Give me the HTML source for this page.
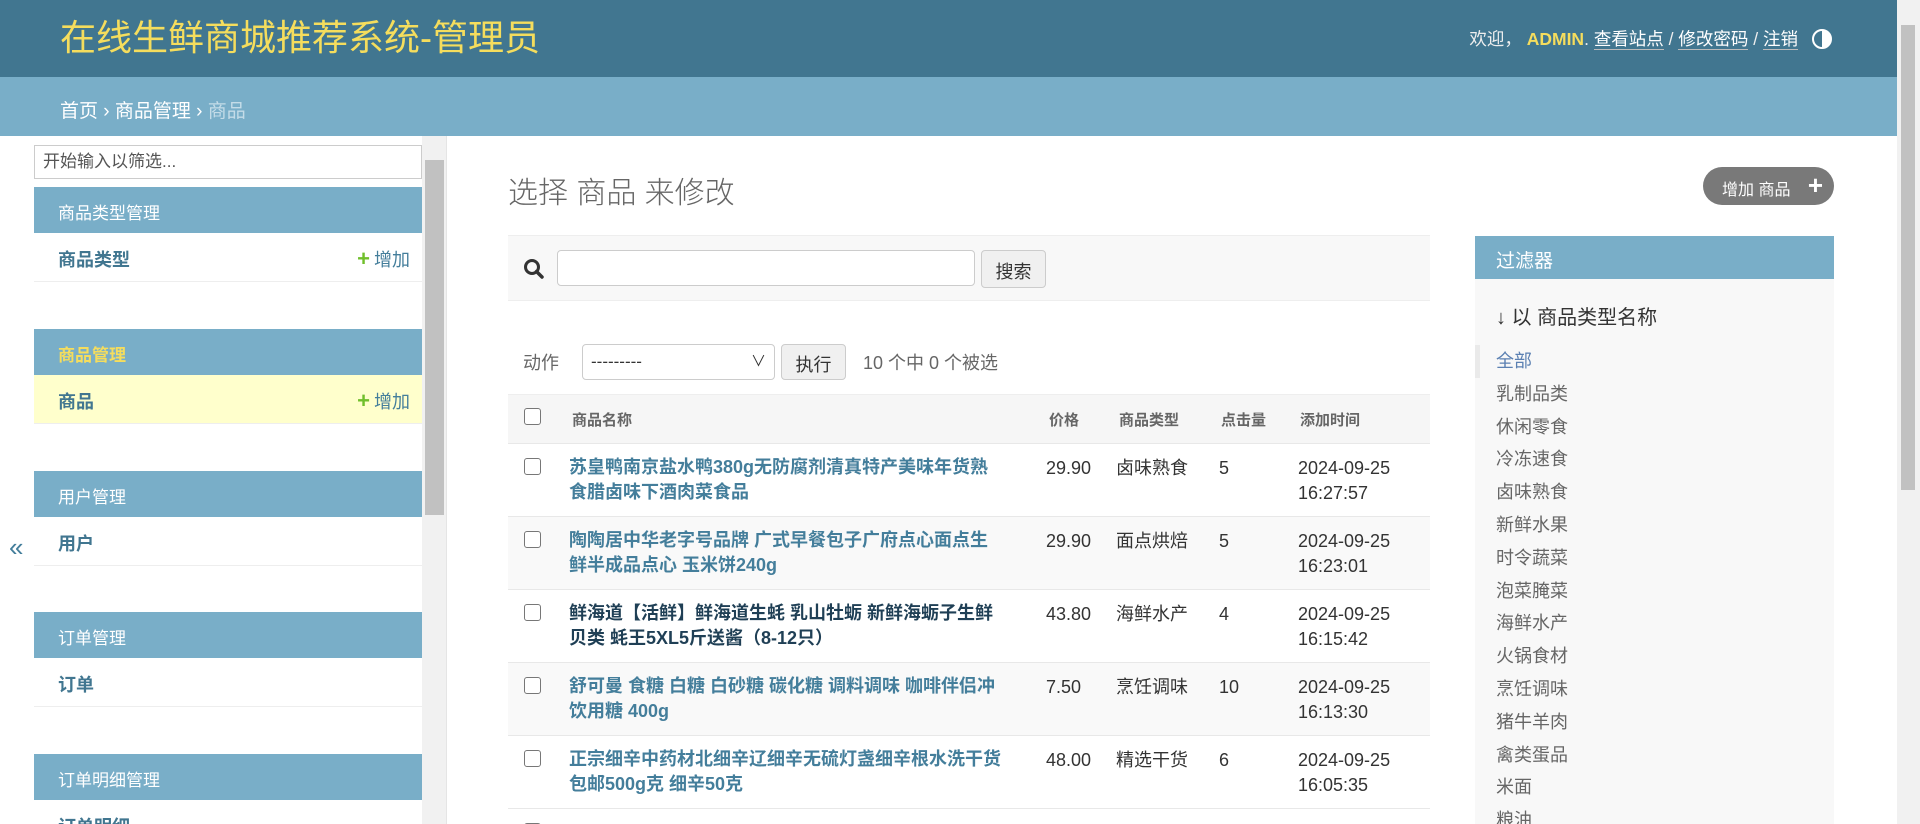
<!DOCTYPE html>
<html style="overflow:hidden;width:1920px;height:824px"><head><meta charset="utf-8"><style>
*{box-sizing:border-box;margin:0;padding:0}
body{width:1920px;height:824px;overflow:hidden;font-family:"Liberation Sans","Noto Sans CJK SC",sans-serif;color:#333;background:#fff;position:relative;font-size:17px}
.hdr{position:absolute;left:0;top:0;width:1897px;height:77px;background:#417690}
.hdr .t{position:absolute;left:60px;top:17px;font-size:36px;color:#f5dd5d;line-height:42px}
.hdr .u{position:absolute;right:99px;top:27px;font-size:17.5px;line-height:24px;color:#eee}
.hdr .u b{color:#f5dd5d}
.hdr .u a{color:#fff;border-bottom:1px solid #bbb;text-decoration:none}
.moon{position:absolute;right:65px;top:29px;width:20px;height:20px;border-radius:50%;border:2px solid #fff;background:linear-gradient(90deg,#417690 50%,#fff 50%)}
.bc{position:absolute;left:0;top:77px;width:1897px;height:59px;background:#79aec8;color:#fff;font-size:19px;padding:19px 0 0 60px}
.bc span{color:#c4dce8}
.vs{position:absolute;right:0;top:0;width:23px;height:824px;background:#f1f1f1}
.vs .th{position:absolute;left:4px;top:25px;width:14px;height:465px;background:#c1c1c1}
.side{position:absolute;left:34px;top:136px;width:388px;height:688px;overflow:hidden}
.sinput{position:absolute;left:0;top:9px;width:388px;height:34px;border:1px solid #ccc;font-size:17px;color:#555;padding:6px 8px;line-height:20px}
.mh{position:absolute;left:0;width:388px;height:46px;background:#79aec8;color:#fff;font-size:17px;padding:12px 0 0 24px}
.mr{position:absolute;left:0;width:388px;height:49px;border-bottom:1px solid #eee;font-size:18px;font-weight:bold;color:#417690;padding:13px 0 0 24px}
.mr .add{position:absolute;right:12px;top:13px;font-weight:normal;color:#447e9b;font-size:18px}
.mr .add i{font-style:normal;color:#70bf2b;font-weight:bold;font-size:22px;margin-right:4px}
.ss{position:absolute;left:422px;top:136px;width:25px;height:688px;background:#f1f1f1;border-right:1px solid #e5e5e5}
.ss .th{position:absolute;left:3px;top:24px;width:19px;height:355px;background:#c1c1c1}
.coll{position:absolute;left:9px;top:532px;font-size:26px;color:#447e9b}
h1{position:absolute;left:508px;top:168px;font-size:30px;font-weight:300;color:#666}
.addbtn{position:absolute;left:1703px;top:167px;width:131px;height:38px;border-radius:19px;background:#797979;color:#fff;font-size:16px;padding:9px 0 0 19px}
.addbtn b{position:absolute;right:11px;top:3px;font-size:26px}
.tb{position:absolute;left:508px;top:235px;width:922px;height:66px;background:#f8f8f8;border-top:1px solid #eee;border-bottom:1px solid #eee}
.inp{position:absolute;border:1px solid #ccc;border-radius:4px;background:#fff}
.btn{position:absolute;border:1px solid #ccc;border-radius:4px;background:#f0f0f0;font-size:18px;color:#333;text-align:center}
.thead{position:absolute;left:508px;top:394px;width:922px;height:49px;background:#f6f6f6;border-top:1px solid #eee;font-size:15px;font-weight:bold;color:#666}
.cb{position:absolute;width:17px;height:17px;border:1.5px solid #777;border-radius:3px;background:#fff}
.wrap{position:absolute;left:0;top:0;width:1920px;height:824px;overflow:hidden}
.row{position:absolute;left:508px;width:922px;height:74px;border-top:1px solid #e8e8e8;font-size:18px;line-height:25px;color:#333}
.row .n{position:absolute;left:61px;top:11px;width:436px;font-weight:bold;color:#447e9b}
.row .c{position:absolute;top:12px}
.flt{position:absolute;left:1475px;top:236px;width:359px;height:588px;background:#f8f8f8;overflow:hidden}
.flt .h{height:43px;background:#79aec8;color:#fff;font-size:19px;padding:10px 0 0 21px}
.flt .s{position:absolute;left:21px;top:65px;font-size:20px;color:#333}
.flt ul{list-style:none;position:absolute;left:0;top:109px;font-size:18px;line-height:32.8px;color:#666}
.flt li{padding-left:21px}
.flt li.sel{color:#5b80b2;border-left:5px solid #eaeaea;padding-left:16px}
</style></head><body><div class="wrap">
<div class="hdr"><div class="t">在线生鲜商城推荐系统-管理员</div>
<div class="u">欢迎， <b>ADMIN</b>. <a>查看站点</a> / <a>修改密码</a> / <a>注销</a></div><div class="moon"></div></div>
<div class="bc">首页 › 商品管理 › <span>商品</span></div>
<div class="vs"><div class="th"></div></div>
<div class="coll">«</div>
<div class="side">
<div class="sinput">开始输入以筛选...</div>
<div class="mh" style="top:51px">商品类型管理</div>
<div class="mr" style="top:97px">商品类型<span class="add"><i>+</i>增加</span></div>
<div class="mh" style="top:193px;color:#f5dd5d;font-weight:bold">商品管理</div>
<div class="mr" style="top:239px;background:#ffc">商品<span class="add"><i>+</i>增加</span></div>
<div class="mh" style="top:335px">用户管理</div>
<div class="mr" style="top:381px">用户</div>
<div class="mh" style="top:476px">订单管理</div>
<div class="mr" style="top:522px">订单</div>
<div class="mh" style="top:618px">订单明细管理</div>
<div class="mr" style="top:664px">订单明细</div>
</div>
<div class="ss"><div class="th"></div></div>
<h1>选择 商品 来修改</h1>
<div class="addbtn">增加 商品<b>+</b></div>
<div class="tb">
<svg style="position:absolute;left:15px;top:22px" width="22" height="22" viewBox="0 0 22 22"><circle cx="9" cy="9" r="6.5" fill="none" stroke="#333" stroke-width="3"/><path d="M13.5 13.5L19 19" stroke="#333" stroke-width="3.5" stroke-linecap="round"/></svg>
<div class="inp" style="left:49px;top:14px;width:418px;height:36px"></div>
<div class="btn" style="left:473px;top:14px;width:65px;height:38px;padding-top:7px">搜索</div>
</div>
<div style="position:absolute;left:523px;top:349px;font-size:18px;color:#666">动作</div>
<div class="inp" style="left:582px;top:344px;width:193px;height:36px;font-size:17px;padding:7px 8px">---------<span style="position:absolute;right:8px;top:5px;font-size:15px">∨</span></div>
<div class="btn" style="left:781px;top:344px;width:65px;height:36px;padding-top:6px">执行</div>
<div style="position:absolute;left:863px;top:349px;font-size:18px;color:#666">10 个中 0 个被选</div>
<div class="thead">
<div class="cb" style="left:16px;top:13px"></div>
<span style="position:absolute;left:64px;top:14px">商品名称</span>
<span style="position:absolute;left:541px;top:14px">价格</span>
<span style="position:absolute;left:611px;top:14px">商品类型</span>
<span style="position:absolute;left:713px;top:14px">点击量</span>
<span style="position:absolute;left:792px;top:14px">添加时间</span>
</div>
<div class="row" style="top:443px"><div class="cb" style="left:16px;top:14px"></div><div class="n">苏皇鸭南京盐水鸭380g无防腐剂清真特产美味年货熟食腊卤味下酒肉菜食品</div><div class="c" style="left:538px">29.90</div><div class="c" style="left:608px">卤味熟食</div><div class="c" style="left:711px">5</div><div class="c" style="left:790px">2024-09-25<br>16:27:57</div></div>
<div class="row" style="top:516px;background:#f9f9f9"><div class="cb" style="left:16px;top:14px"></div><div class="n">陶陶居中华老字号品牌 广式早餐包子广府点心面点生鲜半成品点心 玉米饼240g</div><div class="c" style="left:538px">29.90</div><div class="c" style="left:608px">面点烘焙</div><div class="c" style="left:711px">5</div><div class="c" style="left:790px">2024-09-25<br>16:23:01</div></div>
<div class="row" style="top:589px"><div class="cb" style="left:16px;top:14px"></div><div class="n" style="color:#1f3f55">鲜海道【活鲜】鲜海道生蚝 乳山牡蛎 新鲜海蛎子生鲜贝类 蚝王5XL5斤送酱（8-12只）</div><div class="c" style="left:538px">43.80</div><div class="c" style="left:608px">海鲜水产</div><div class="c" style="left:711px">4</div><div class="c" style="left:790px">2024-09-25<br>16:15:42</div></div>
<div class="row" style="top:662px;background:#f9f9f9"><div class="cb" style="left:16px;top:14px"></div><div class="n">舒可曼 食糖 白糖 白砂糖 碳化糖 调料调味 咖啡伴侣冲饮用糖 400g</div><div class="c" style="left:538px">7.50</div><div class="c" style="left:608px">烹饪调味</div><div class="c" style="left:711px">10</div><div class="c" style="left:790px">2024-09-25<br>16:13:30</div></div>
<div class="row" style="top:735px"><div class="cb" style="left:16px;top:14px"></div><div class="n">正宗细辛中药材北细辛辽细辛无硫灯盏细辛根水洗干货包邮500g克 细辛50克</div><div class="c" style="left:538px">48.00</div><div class="c" style="left:608px">精选干货</div><div class="c" style="left:711px">6</div><div class="c" style="left:790px">2024-09-25<br>16:05:35</div></div>
<div class="row" style="top:808px;height:16px;overflow:hidden"><div class="cb" style="left:16px;top:14px"></div></div>
<div class="flt"><div class="h">过滤器</div>
<div class="s">↓ 以 商品类型名称</div>
<ul><li class="sel">全部</li><li>乳制品类</li><li>休闲零食</li><li>冷冻速食</li><li>卤味熟食</li><li>新鲜水果</li><li>时令蔬菜</li><li>泡菜腌菜</li><li>海鲜水产</li><li>火锅食材</li><li>烹饪调味</li><li>猪牛羊肉</li><li>禽类蛋品</li><li>米面</li><li>粮油</li></ul>
</div>
</div></body></html>
